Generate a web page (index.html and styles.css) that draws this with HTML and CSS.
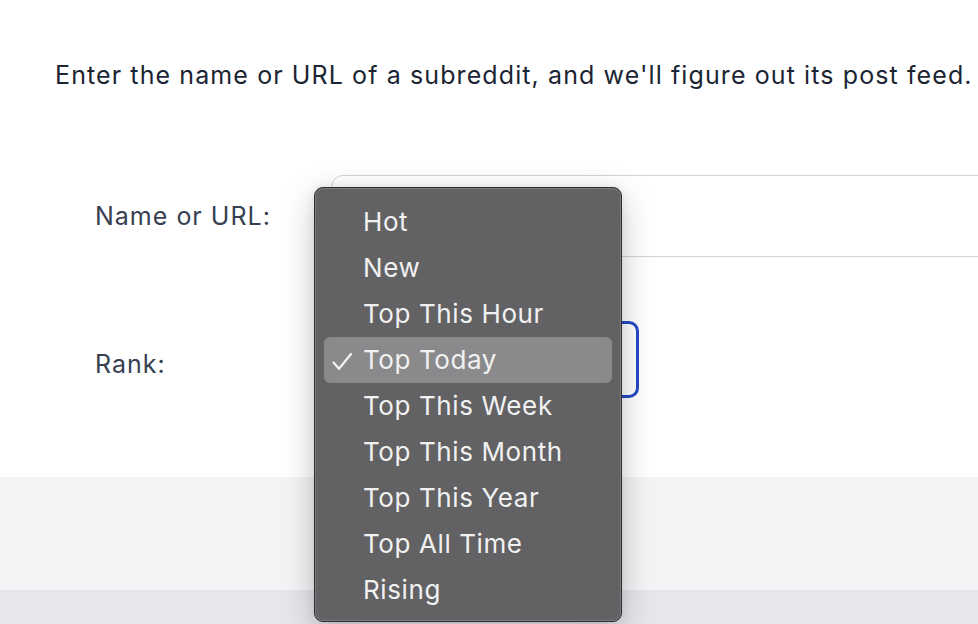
FILE: index.html
```html
<!DOCTYPE html>
<html lang="en">
<head>
<meta charset="utf-8">
<title>Subreddit feed</title>
<link rel="stylesheet" href="styles.css">
</head>
<body>
<div class="page">
  <main class="main">
    <p class="intro">Enter the name or URL of a subreddit, and we'll figure out its post feed.</p>
    <form class="form">
      <label class="label" for="name">Name or URL:</label>
      <div class="control"><div class="input" id="name"></div></div>
      <label class="label label-low">Rank:</label>
      <div class="control"><div class="select"></div></div>
      <ul class="menu">
        <li class="item">Hot</li>
        <li class="item">New</li>
        <li class="item">Top This Hour</li>
        <li class="item selected"><svg class="check" width="24" height="24" viewBox="0 0 24 24"><path d="M1.5 13.5 L7 19.8 L19 5" fill="none" stroke="#f2f2f2" stroke-width="2.2" stroke-linecap="round" stroke-linejoin="round"/></svg>Top Today</li>
        <li class="item">Top This Week</li>
        <li class="item">Top This Month</li>
        <li class="item">Top This Year</li>
        <li class="item">Top All Time</li>
        <li class="item">Rising</li>
      </ul>
    </form>
  </main>
  <div class="band"></div>
  <div class="bottom"></div>
</div>
</body>
</html>
```

FILE: styles.css
```css
html, body {
  margin: 0;
  padding: 0;
  overflow: hidden;
  background: #ffffff;
}
body {
  font-family: Inter, "Noto Sans", "Liberation Sans", sans-serif;
  width: 978px;
  height: 624px;
}
.page {
  display: flex;
  flex-direction: column;
  height: 624px;
}
.main {
  height: 477px;
  flex: none;
  background: #ffffff;
}
.intro {
  margin: 0;
  padding: 57px 0 0 55px;
  font-size: 25px;
  line-height: 36px;
  color: #1c2533;
  white-space: nowrap;
  letter-spacing: 1.1px;
}
.form {
  position: relative;
  display: grid;
  grid-template-columns: 236px 700px;
  row-gap: 64px;
  align-items: center;
  margin-top: 82px;
  padding-left: 95px;
}
.label {
  font-size: 25px;
  line-height: 32px;
  color: #374151;
  letter-spacing: 1px;
}
.label-low {
  margin-top: 8px;
}
.input {
  height: 80px;
  border: 1px solid #d1d5db;
  border-radius: 12px;
  box-sizing: content-box;
  width: 690px;
}
.select {
  height: 71px;
  width: 302px;
  border: 3px solid #2449c8;
  border-radius: 10px;
}
.menu {
  position: absolute;
  left: 314px;
  top: 12px;
  width: 306px;
  height: 422px;
  margin: 0;
  padding: 11px 0 0;
  list-style: none;
  background: #626264;
  border: 1px solid #2e2e2f;
  border-radius: 9px;
  box-shadow: inset 0 0 0 1px #7c7c7e, 0 10px 34px rgba(0, 0, 0, 0.22), 0 0 10px rgba(0, 0, 0, 0.08);
  box-sizing: content-box;
}
.item {
  position: relative;
  height: 46px;
  margin: 0 9px;
  padding-left: 39px;
  font-size: 26px;
  line-height: 46px;
  letter-spacing: 0.6px;
  color: #f1f1f1;
  border-radius: 6px;
  white-space: nowrap;
}
.selected {
  background: #8a8a8c;
}
.check {
  position: absolute;
  left: 8px;
  top: 12px;
}
.band {
  height: 113px;
  flex: none;
  background: #f3f4f6;
  box-shadow: 0 1px 2px rgba(0, 0, 0, 0.06);
}
.bottom {
  flex: 1;
  background: #e5e7eb;
}
```
